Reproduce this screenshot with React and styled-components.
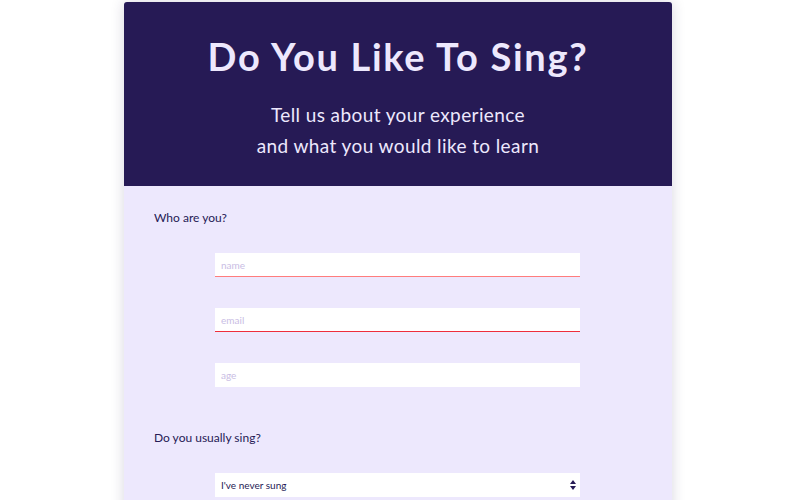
import React from 'react'
import styled, { createGlobalStyle } from 'styled-components'

const GlobalStyle = createGlobalStyle`
  html, body {
    margin: 0;
    padding: 0;
    background: #ffffff;
    overflow: hidden;
  }
  body {
    font-family: Lato, "Open Sans", sans-serif;
  }
`

const Page = styled.div`
  padding: 2px 4px 0 0;
`

const Card = styled.div`
  width: 548px;
  margin: 0 auto;
  border-radius: 3px;
  overflow: hidden;
  box-shadow: 0 0 14px rgba(40, 30, 80, 0.18);
  background: #ede8fd;
`

const Header = styled.header`
  background: #261a55;
  color: #ede8fd;
  text-align: center;
  padding: 32px 20px 25px;
`

const Title = styled.h1`
  margin: 0;
  font-size: 38px;
  font-weight: 700;
  line-height: 44px;
  letter-spacing: 1.7px;
`

const Subtitle = styled.p`
  margin: 21px 0 0;
  font-size: 19px;
  font-weight: 400;
  line-height: 31px;
  letter-spacing: 0.4px;
`

const Form = styled.form`
  padding: 25px 30px 0;
`

const Section = styled.div`
  display: flex;
  flex-direction: column;
  margin-bottom: 44px;
`

const Label = styled.div`
  color: #261a55;
  font-size: 12px;
  line-height: 14px;
  margin-bottom: 28px;
`

const Input = styled.input`
  display: block;
  box-sizing: border-box;
  width: 365px;
  height: 24px;
  margin: 0 0 31px 61px;
  padding: 0 6px;
  border: none;
  border-bottom: 1px solid ${p => p.$line || 'transparent'};
  background: #ffffff;
  font-family: Lato, sans-serif;
  font-size: 10px;
  color: #261a55;
  outline: none;

  &::placeholder {
    color: #c9bde4;
  }
  &:last-child {
    margin-bottom: 0;
  }
`

const arrows = encodeURIComponent(
  '<svg xmlns="http://www.w3.org/2000/svg" width="6" height="10" viewBox="0 0 6 10"><path d="M3 0L6 4H0z M3 10L0 6h6z" fill="#261a55"/></svg>'
)

const Select = styled.select`
  display: block;
  box-sizing: border-box;
  width: 365px;
  height: 24px;
  margin: 0 0 0 61px;
  padding: 0 6px;
  border: none;
  border-radius: 0;
  appearance: none;
  background: #ffffff url("data:image/svg+xml;charset=UTF-8,${arrows}") no-repeat right 4px center;
  font-family: Lato, sans-serif;
  font-size: 10px;
  color: #261a55;
  outline: none;
`

export default function App() {
  return (
    <Page>
      <GlobalStyle />
      <Card>
        <Header>
          <Title>Do You Like To Sing?</Title>
          <Subtitle>
            Tell us about your experience
            <br />
            and what you would like to learn
          </Subtitle>
        </Header>
        <Form>
          <Section>
            <Label>Who are you?</Label>
            <Input type="text" placeholder="name" $line="#ff7d7d" />
            <Input type="email" placeholder="email" $line="#ee2e3c" />
            <Input type="number" placeholder="age" />
          </Section>
          <Section>
            <Label>Do you usually sing?</Label>
            <Select defaultValue="never">
              <option value="never">I've never sung</option>
              <option value="sometimes">Sometimes</option>
              <option value="often">Often</option>
            </Select>
          </Section>
        </Form>
      </Card>
    </Page>
  )
}
